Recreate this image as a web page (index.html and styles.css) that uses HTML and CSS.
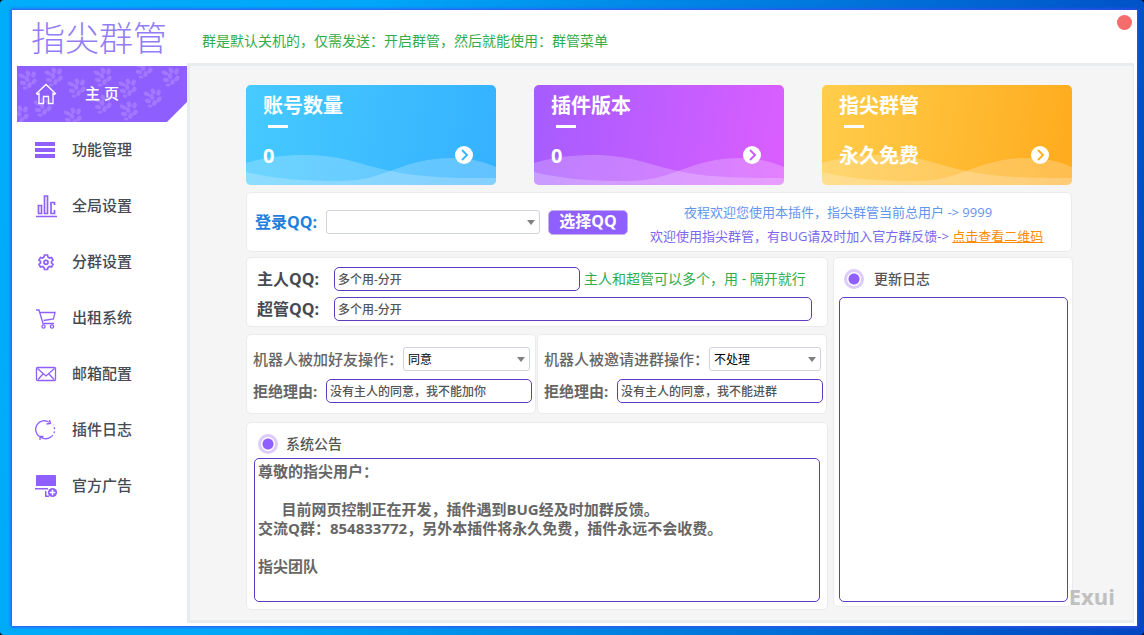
FILE: index.html
```html
<!DOCTYPE html>
<html lang="zh-CN">
<head>
<meta charset="utf-8">
<title>指尖群管</title>
<link rel="stylesheet" href="styles.css">
</head>
<body>
<svg class="defs" aria-hidden="true">
  <symbol id="paw" viewBox="-10 -10 20 20">
    <g fill="#fff">
      <ellipse cx="-6" cy="-4" rx="3.600" ry="2" transform="rotate(25 -6 -4)"/>
      <ellipse cx="0" cy="-6.500" rx="2.200" ry="3" transform="rotate(-25 0 -6.500)"/>
      <ellipse cx="5.500" cy="-5.500" rx="2.200" ry="3.200" transform="rotate(15 5.500 -5.500)"/>
      <ellipse cx="-1" cy="-1" rx="2.200" ry="3" transform="rotate(-20 -1 -1)"/>
      <ellipse cx="6" cy="1.500" rx="2.200" ry="3.200" transform="rotate(35 6 1.500)"/>
      <ellipse cx="-5" cy="3" rx="3.200" ry="2" transform="rotate(20 -5 3)"/>
      <ellipse cx="1.500" cy="5" rx="2.200" ry="3" transform="rotate(20 1.500 5)"/>
      <ellipse cx="-3" cy="8" rx="2.400" ry="1.500"/>
    </g>
  </symbol>
  <symbol id="waves" viewBox="0 0 250 100" preserveAspectRatio="none">
    <path fill="#fff" fill-opacity=".22" d="M0 78C20 72 38 70 60 70C96 70 116 80 144 86C176 93 212 93 250 93V100H0Z"/>
    <path fill="#fff" fill-opacity=".22" d="M0 87C28 94 60 96 88 96C118 96 130 91 144 86C166 78 182 73 206 73C226 73 238 77 250 82V100H0Z"/>
  </symbol>
  <symbol id="go" viewBox="0 0 18 18">
    <circle cx="9" cy="9" r="9" fill="#fff"/>
    <path d="M7 4L12 9L7 14" fill="none" stroke="currentColor" stroke-width="2"/>
  </symbol>
</svg>
<div class="window">
  <header class="topbar">
    <h1 class="brand">指尖群管</h1>
    <p class="tip">群是默认关机的，仅需发送：开启群管，然后就能使用：群管菜单</p>
    <button class="close" type="button" aria-label="关闭"></button>
  </header>
  <div class="body">
    <nav class="sidebar">
      <a class="item active" href="#">
        <svg class="paws" viewBox="0 0 170 56" aria-hidden="true">
          <use href="#paw" x="1" y="4" width="20" height="20"/>
          <use href="#paw" x="27" y="1" width="20" height="20"/>
          <use href="#paw" x="50" y="12" width="20" height="20"/>
          <use href="#paw" x="76" y="1" width="20" height="20"/>
          <use href="#paw" x="101" y="12" width="20" height="20"/>
          <use href="#paw" x="117" y="-7" width="20" height="20"/>
          <use href="#paw" x="144" y="1" width="20" height="20"/>
          <use href="#paw" x="126" y="22" width="20" height="20"/>
          <use href="#paw" x="102" y="35" width="20" height="20"/>
          <use href="#paw" x="76" y="28" width="20" height="20"/>
          <use href="#paw" x="46" y="41" width="20" height="20"/>
          <use href="#paw" x="16" y="31" width="20" height="20"/>
          <use href="#paw" x="-7" y="39" width="20" height="20"/>
        </svg>
        <svg class="icon" viewBox="0 0 24 24"><path d="M2.500 11.500L12 2.500L21.500 11.500L20.500 12.500L19 11.500V21.500H14.500V14.500H9.500V21.500H5V11.500L3.500 12.500Z"/></svg>
        <span>主 页</span>
      </a>
      <a class="item" href="#"><svg class="icon solid" viewBox="0 0 24 24"><path d="M1 4H21V8H1ZM1 10H21V14H1ZM1 16H21V20H1Z"/></svg><span>功能管理</span></a>
      <a class="item" href="#"><svg class="icon thick" viewBox="0 0 24 24"><path d="M4.500 11.500H7.500V19.500H4.500ZM10.500 2H13.500V19.500H10.500ZM20.500 11V8.500H17V19.500H20.500V16M2 22.500H23"/></svg><span>全局设置</span></a>
      <a class="item" href="#"><svg class="icon thick" viewBox="0 0 24 24"><path d="M10 7L10.500 5H13.500L14 7L15.500 8L17.500 7.500L19 10L17.500 11.500V13L19 14.500L17.500 17L15.500 16.500L14 17.500L13.500 19.500H10.500L10 17.500L8.500 16.500L6.500 17L5 14.500L6.500 13V11.500L5 10L6.500 7.500L8.500 8Z"/><circle cx="12" cy="12.300" r="2"/></svg><span>分群设置</span></a>
      <a class="item" href="#"><svg class="icon" viewBox="0 0 24 24"><path d="M2 4H5L9 17.500H20M5.500 6.500H21L19.500 13L9.500 14.500"/><circle cx="9.500" cy="20.500" r="1.600"/><circle cx="18" cy="20.500" r="1.600"/></svg><span>出租系统</span></a>
      <a class="item" href="#"><svg class="icon" viewBox="0 0 24 24"><rect x="2.500" y="5.500" width="19" height="13" rx="1"/><path d="M3.500 6.500L12 14L20.500 6.500M4 17.500L9 12M20 17.500L15 12"/></svg><span>邮箱配置</span></a>
      <a class="item" href="#"><svg class="icon" viewBox="0 0 24 24"><path d="M5.500 18.500A8.500 8.500 0 0 1 15 4.200M15.500 2L16.500 5.500L12.500 6M6 22V18.500H9.500M6.500 19A8.500 8.500 0 0 0 17.500 18.500"/><path stroke-dasharray="2 2" d="M17.500 18.500A8.500 8.500 0 0 0 19 7"/></svg><span>插件日志</span></a>
      <a class="item" href="#"><svg class="icon solid" viewBox="0 0 24 24"><path d="M3 1H21Q22 1 22 2V12H2V2Q2 1 3 1ZM1 14H14V15.500H1ZM11 17H12.500V21.500H15V23H11Z"/><circle cx="18.500" cy="18.500" r="4.600"/><path class="plus" d="M18.500 15.700V21.300M15.700 18.500H21.300"/></svg><span>官方广告</span></a>
    </nav>
    <main class="main">
      <section class="cards">
        <article class="card blue">
          <svg class="waves" aria-hidden="true"><use href="#waves"/></svg>
          <h2>账号数量</h2><i class="dash"></i>
          <div class="card-foot"><b>0</b><svg class="go"><use href="#go"/></svg></div>
        </article>
        <article class="card violet">
          <svg class="waves" aria-hidden="true"><use href="#waves"/></svg>
          <h2>插件版本</h2><i class="dash"></i>
          <div class="card-foot"><b>0</b><svg class="go"><use href="#go"/></svg></div>
        </article>
        <article class="card amber">
          <svg class="waves" aria-hidden="true"><use href="#waves"/></svg>
          <h2>指尖群管</h2><i class="dash"></i>
          <div class="card-foot"><b>永久免费</b><svg class="go"><use href="#go"/></svg></div>
        </article>
      </section>
      <section class="panel login">
        <label class="login-label" for="qq">登录QQ:</label>
        <span class="pick account"><select id="qq"><option></option></select></span>
        <button class="choose" type="button">选择QQ</button>
        <div class="notice">
          <p class="welcome">夜程欢迎您使用本插件，指尖群管当前总用户 -&gt; 9999</p>
          <p class="feedback">欢迎使用指尖群管，有BUG请及时加入官方群反馈-&gt; <a href="#">点击查看二维码</a></p>
        </div>
      </section>
      <div class="columns">
        <div class="left">
          <section class="panel owners">
            <div class="row"><label for="owner">主人QQ:</label><input class="owner-input" id="owner" value="多个用-分开"><span class="hint">主人和超管可以多个，用 - 隔开就行</span></div>
            <div class="row"><label for="admin">超管QQ:</label><input class="grow" id="admin" value="多个用-分开"></div>
          </section>
          <div class="pair">
            <section class="panel action">
              <div class="row pick-row"><label for="friend">机器人被加好友操作：</label><span class="pick grow"><select id="friend"><option>同意</option></select></span></div>
              <div class="row"><label class="reason" for="friend-reason">拒绝理由:</label><input class="grow" id="friend-reason" value="没有主人的同意，我不能加你"></div>
            </section>
            <section class="panel action">
              <div class="row pick-row"><label for="group">机器人被邀请进群操作：</label><span class="pick grow"><select id="group"><option>不处理</option></select></span></div>
              <div class="row"><label class="reason" for="group-reason">拒绝理由:</label><input class="grow" id="group-reason" value="没有主人的同意，我不能进群"></div>
            </section>
          </div>
          <section class="panel board">
            <label class="board-title" for="news"><i class="dot"></i><span>系统公告</span></label>
            <textarea id="news">尊敬的指尖用户：

      目前网页控制正在开发，插件遇到BUG经及时加群反馈。
交流Q群：854833772，另外本插件将永久免费，插件永远不会收费。

指尖团队</textarea>
          </section>
        </div>
        <section class="panel board log">
          <label class="board-title" for="log"><i class="dot"></i><span>更新日志</span></label>
          <textarea id="log"></textarea>
        </section>
      </div>
      <span class="mark">Exui</span>
    </main>
  </div>
</div>
</body>
</html>
```
FILE: styles.css
```css
* { box-sizing: border-box; }
html { height: 100%; background: #000; }
body {
  margin: 0;
  height: 100%;
  min-height: 600px;
  display: flex;
  padding: 10px 7px 9px 12px;
  border-radius: 4px;
  background: linear-gradient(100deg, #00adfb 0%, #00a6f8 30%, #0078dc 65%, #0046c0 100%);
  font-family: "Open Sans", "Noto Sans CJK SC", sans-serif;
  font-size: 15px;
  color: #666;
}
h1, h2, p { margin: 0; font-weight: 400; }
input, select, textarea, button { font-family: inherit; margin: 0; }
.defs { position: absolute; width: 0; height: 0; }

.window {
  flex: 1;
  display: flex;
  flex-direction: column;
  background: #fff;
  box-shadow: 0 0 3px 1px #3a4cf4;
  min-width: 0;
}
.topbar { position: relative; display: flex; align-items: center; height: 53px; padding-left: 19px; }
.brand { width: 171px; font-size: 34px; font-weight: 300; line-height: 40px; color: #937cf7; padding-top: 3px; }
.tip { font-size: 14px; line-height: 20px; color: #31ad4a; padding-top: 9px; }
.close {
  position: absolute; right: 5px; top: 5px;
  width: 15px; height: 15px; padding: 0;
  border: 0; border-radius: 50%; background: #f56c6c;
}
.body { flex: 1; display: flex; padding: 0 3px 3px 5px; min-height: 0; }

.sidebar { width: 170px; padding-top: 3px; }
.item {
  position: relative;
  display: flex; align-items: center; gap: 14px;
  height: 56px; padding-left: 17px;
  color: #464a53; font-size: 15px; font-weight: 500; text-decoration: none;
}
.item span { padding-bottom: 4px; }
.active {
  background: #8f5fff; color: #fff; gap: 27px;
  clip-path: polygon(0 0, 100% 0, 100% 36px, 150px 100%, 0 100%);
}
.paws { position: absolute; inset: 0; width: 100%; height: 100%; opacity: .16; }
.icon { width: 24px; height: 24px; fill: none; stroke: #8f5fff; stroke-width: 1.3; }
.active .icon { stroke: #fff; }
.thick { stroke-width: 1.7; }
.solid { fill: #8f5fff; stroke: none; }
.plus { stroke: #fff; stroke-width: 1.5; }

.main {
  position: relative;
  flex: 1; min-width: 0;
  display: flex; flex-direction: column;
  padding: 19px 60px 10px 56px;
  background: #f5f5f5;
  border: 3px solid #e9ecef; border-right-width: 1px;
}
.cards { display: grid; grid-template-columns: repeat(3, 1fr); gap: 38px; margin-right: 1px; }
.card { position: relative; height: 100px; padding: 7px 23px 0 17px; border-radius: 5px; color: #fff; overflow: hidden; }
.blue { background: linear-gradient(100deg, #46caff, #35b1ff); }
.violet { background: linear-gradient(100deg, #a55cff, #dc5eff); }
.amber { background: linear-gradient(100deg, #ffcd4b, #ffab1d); }
.blue .go { color: #3db8ff; }
.violet .go { color: #c75eff; }
.amber .go { color: #ffb128; }
.waves { position: absolute; inset: 0; width: 100%; height: 100%; }
.card h2 { position: relative; font-size: 20px; font-weight: 700; line-height: 28px; }
.dash { display: block; width: 20px; height: 3px; margin: 5px 0 0 5px; background: #fff; }
.card-foot { position: relative; display: flex; align-items: center; justify-content: space-between; height: 28px; margin-top: 13px; font-size: 20px; line-height: 28px; }
.card-foot b { padding-top: 2px; }
.go { width: 18px; height: 18px; }

.panel { background: #fff; border: 1px solid #e9ecef; border-radius: 5px; }
.login { display: flex; align-items: center; height: 60px; margin: 7px 1px 0 0; padding-left: 8px; }
.login-label { width: 71px; padding-bottom: 2px; font-size: 16px; font-weight: 700; color: #1e80dc; }
.pick { position: relative; display: block; }
.account { width: 214px; }
.pick::after {
  content: ""; position: absolute; right: 5px; top: 10px;
  border: 4px solid transparent; border-top: 5px solid #808080; border-bottom: 0;
  pointer-events: none;
}
select {
  display: block; width: 100%; height: 24px; padding: 0 4px;
  appearance: none; background: #fff; border: 1px solid #ced4da; border-radius: 3px;
  font-size: 12px; color: #000;
}
.choose {
  width: 80px; height: 25px; margin-left: 8px; padding: 0 0 2px;
  border: 1px solid #c5b3e8; border-radius: 5px; background: #8f5fff;
  color: #fff; font-size: 16px; font-weight: 700; line-height: 20px;
}
.notice { margin-left: 22px; font-size: 13px; line-height: 24px; white-space: nowrap; padding-top: 3px; }
.welcome { color: #6495ed; padding-left: 34px; }
.feedback { color: #7b68ee; }
.feedback a { color: #ff8c00; }

.columns { flex: 1; display: grid; grid-template-columns: 1fr 240px; gap: 5px; margin-top: 5px; min-height: 0; }
.left { display: flex; flex-direction: column; min-width: 0; }
.row { display: flex; align-items: center; height: 24px; }
.row label { padding-bottom: 2px; }
.grow { flex: 1; min-width: 0; }
input, textarea { border: 1px solid #5e3cc4; border-radius: 5px; background: #fff; color: #555; font-weight: 500; }
input { height: 24px; padding: 0 3px; font-size: 12px; }
.owners { display: grid; gap: 6px; height: 70px; padding: 9px 15px 0 10px; align-content: start; }
.owners label { width: 77px; font-size: 16px; font-weight: 700; color: #464a53; }
.owner-input { width: 246px; }
.hint { margin-left: 4px; padding-bottom: 3px; font-size: 14px; color: #31ad4a; white-space: nowrap; }
.pair { display: grid; grid-template-columns: 1fr 1fr; gap: 1px; margin: 7px 1px 0 0; }
.action { display: grid; gap: 8px; height: 80px; padding: 12px 3px 0 6px; align-content: start; font-weight: 500; }
.action label { white-space: nowrap; }
.pick-row { padding-right: 2px; }
.reason { width: 73px; font-weight: 700; }
.board { flex: 1; display: flex; flex-direction: column; margin-top: 8px; padding: 11px 7px 7px; }
.board-title { display: flex; align-items: center; gap: 8px; height: 20px; padding-left: 4px; font-size: 14px; font-weight: 500; color: #555; }
.board-title span { padding-bottom: 2px; }
.dot { width: 20px; height: 20px; border: 3px solid #dccbfb; border-radius: 50%; background: radial-gradient(circle, #8f5fff 5px, #fff 6px); }
textarea {
  flex: 1; display: block; margin-top: 4px; padding: 3px; resize: none;
  font-size: 15px; line-height: 19px; font-weight: 700; color: #666;
}
.log { margin: 0 0 3px; padding: 11px 4px 4px 5px; }
.log .board-title { gap: 10px; padding-left: 5px; }
.log textarea { margin-top: 8px; }
.mark { position: absolute; right: 18px; bottom: 8px; font-size: 22px; font-weight: 700; line-height: 32px; color: #c0c0c0; }
```
